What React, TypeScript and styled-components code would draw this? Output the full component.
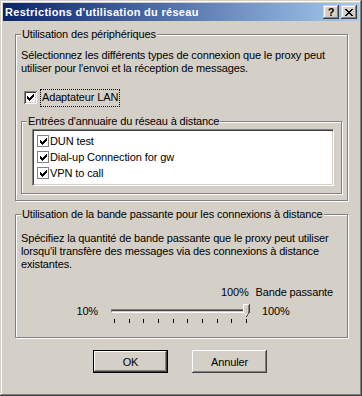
import React from "react";
import styled, { createGlobalStyle } from "styled-components";

const GlobalStyle = createGlobalStyle`
  html, body { margin: 0; padding: 0; background: #d4d0c8; }
  body {
    font-family: "Liberation Sans", Arial, sans-serif;
    font-size: 11px;
    color: #000;
  }
`;

const Window = styled.div`
  width: 362px;
  height: 396px;
  box-sizing: border-box;
  padding: 3px;
  background: #d4d0c8;
  box-shadow: inset -1px -1px 0 #404040, inset 1px 1px 0 #d4d0c8,
    inset -2px -2px 0 #808080, inset 2px 2px 0 #fff;
  display: flex;
  flex-direction: column;
`;

const Caption = styled.div`
  height: 18px;
  display: flex;
  align-items: center;
  padding: 0 2px;
  background: linear-gradient(to right, #0a246a, #a6caf0);
`;

const Title = styled.span`
  flex: 1;
  color: #fff;
  font-weight: bold;
  font-size: 11px;
  letter-spacing: 0.3px;
  white-space: nowrap;
  line-height: 18px;
`;

const CaptionButtons = styled.div`
  display: flex;
  gap: 2px;
`;

const CaptionButton = styled.div`
  width: 16px;
  height: 14px;
  box-sizing: border-box;
  background: #d4d0c8;
  box-shadow: inset -1px -1px 0 #404040, inset 1px 1px 0 #d4d0c8,
    inset -2px -2px 0 #808080, inset 2px 2px 0 #fff;
  display: flex;
  align-items: center;
  justify-content: center;
  font-weight: bold;
  font-size: 11px;
  line-height: 14px;
`;

const Body = styled.div`
  flex: 1;
  display: flex;
  flex-direction: column;
  padding: 13px 11px 0 12px;
`;

const GroupBox = styled.div<{ $pad: string; $mt?: number }>`
  position: relative;
  border: 1px solid #808080;
  box-shadow: inset 1px 1px 0 #fff, 1px 1px 0 #fff;
  padding: ${(p) => p.$pad};
  margin-top: ${(p) => p.$mt ?? 0}px;
  display: flex;
  flex-direction: column;
`;

const GroupLabel = styled.span`
  position: absolute;
  top: -7px;
  left: 5px;
  padding: 0 1px;
  background: #d4d0c8;
  line-height: 13px;
  letter-spacing: -0.15px;
  white-space: nowrap;
`;

const Paragraph = styled.p`
  margin: 0;
  line-height: 13px;
  letter-spacing: -0.15px;
  white-space: nowrap;
`;

const CheckRow = styled.label`
  display: flex;
  align-items: center;
  height: 17px;
  margin-top: 14px;
  padding-left: 3px;
  gap: 4px;
`;

const Check3D = styled.span`
  width: 13px;
  height: 13px;
  box-sizing: border-box;
  background: #fff;
  box-shadow: inset 1px 1px 0 #808080, inset -1px -1px 0 #fff,
    inset 2px 2px 0 #404040, inset -2px -2px 0 #d4d0c8;
  display: flex;
  align-items: center;
  justify-content: center;
`;

const FocusLabel = styled.span`
  outline: 1px dotted #000;
  padding: 1px 1px 2px 1px;
  line-height: 13px;
  letter-spacing: -0.15px;
`;

const ListBox = styled.div`
  height: 57px;
  box-sizing: border-box;
  background: #fff;
  border-top: 1px solid #808080;
  border-left: 1px solid #808080;
  border-right: 1px solid #fff;
  border-bottom: 1px solid #fff;
  box-shadow: inset 1px 1px 0 #404040, inset -1px -1px 0 #d4d0c8;
  padding: 3px 0 0 4px;
  display: flex;
  flex-direction: column;
`;

const ListRow = styled.div`
  display: flex;
  align-items: center;
  height: 16px;
  gap: 1px;
  letter-spacing: -0.1px;
`;

const FlatCheck = styled.span`
  width: 12px;
  height: 12px;
  box-sizing: border-box;
  border: 1px solid #808080;
  background: #fff;
  display: flex;
  align-items: center;
  justify-content: center;
`;

const ValueRow = styled.div`
  display: flex;
  justify-content: flex-end;
  gap: 7px;
  margin-top: 15px;
  line-height: 13px;
  letter-spacing: -0.15px;
`;

const SliderRow = styled.div`
  display: flex;
  align-items: flex-start;
  margin-top: 4px;
  line-height: 13px;
  letter-spacing: -0.15px;
`;

const SliderLabel = styled.span<{ $w?: number; $ml?: number }>`
  ${(p) => (p.$w ? `width: ${p.$w}px; text-align: right;` : "")}
  margin-left: ${(p) => p.$ml ?? 0}px;
  margin-top: 2px;
`;

const TrackArea = styled.div`
  position: relative;
  width: 138px;
  margin-left: 13px;
  display: flex;
  flex-direction: column;
`;

const Channel = styled.div`
  margin-top: 6px;
  height: 4px;
  box-sizing: border-box;
  border-top: 1px solid #808080;
  border-left: 1px solid #808080;
  border-right: 1px solid #fff;
  border-bottom: 1px solid #fff;
  background: #d4d0c8;
  box-shadow: inset 0 1px 0 #404040;
`;

const Ticks = styled.div`
  margin-top: 6px;
  height: 4px;
  padding: 0 2px 0 3px;
  display: flex;
  justify-content: space-between;
`;

const Tick = styled.span`
  width: 1px;
  height: 4px;
  background: #000;
`;

const Thumb = styled.svg`
  position: absolute;
  left: 132px;
  top: 1px;
`;

const ButtonRow = styled.div`
  display: flex;
  gap: 24px;
  margin-top: 12px;
  padding-left: 78px;
`;

const PushButton = styled.button<{ $default?: boolean }>`
  width: 75px;
  height: 23px;
  box-sizing: border-box;
  padding: 0;
  margin: 0;
  font-family: "Liberation Sans", Arial, sans-serif;
  font-size: 11px;
  color: #000;
  background: #d4d0c8;
  border: ${(p) => (p.$default ? "1px solid #000" : "none")};
  box-shadow: inset -1px -1px 0 #404040, inset 1px 1px 0 #fff,
    inset -2px -2px 0 #808080, inset 2px 2px 0 #d4d0c8;
  letter-spacing: -0.15px;
`;

const CheckMark = () => (
  <svg width="7" height="7" viewBox="0 0 7 7" shapeRendering="crispEdges">
    <path
      fill="#000"
      d="M6 0h1v1h-1z M5 1h2v1h-2z M0 2h1v1h-1z M4 2h3v1h-3z M0 3h2v1h-2z M3 3h3v1h-3z M0 4h5v1h-5z M1 5h3v1h-3z M2 6h1v1h-1z"
    />
  </svg>
);

const CloseGlyph = () => (
  <svg width="8" height="7" viewBox="0 0 8 7" shapeRendering="crispEdges">
    <path
      fill="#000"
      d="M0 0h2v1h-2z M6 0h2v1h-2z M1 1h2v1h-2z M5 1h2v1h-2z M2 2h4v1h-4z M3 3h2v1h-2z M2 4h4v1h-4z M1 5h2v1h-2z M5 5h2v1h-2z M0 6h2v1h-2z M6 6h2v1h-2z"
    />
  </svg>
);

const entries = ["DUN test", "Dial-up Connection for gw", "VPN to call"];

export default function App() {
  return (
    <>
      <GlobalStyle />
      <Window>
        <Caption>
          <Title>Restrictions d'utilisation du réseau</Title>
          <CaptionButtons>
            <CaptionButton>?</CaptionButton>
            <CaptionButton>
              <CloseGlyph />
            </CaptionButton>
          </CaptionButtons>
        </Caption>
        <Body>
          <GroupBox $pad="14px 5px 6px 5px">
            <GroupLabel>Utilisation des périphériques</GroupLabel>
            <Paragraph>
              Sélectionnez les différents types de connexion que le proxy peut
              <br />
              utiliser pour l'envoi et la réception de messages.
            </Paragraph>
            <CheckRow>
              <Check3D>
                <CheckMark />
              </Check3D>
              <FocusLabel>Adaptateur LAN</FocusLabel>
            </CheckRow>
            <GroupBox $pad="7px 7px 7px 10px" $mt={15}>
              <GroupLabel>Entrées d'annuaire du réseau à distance</GroupLabel>
              <ListBox>
                {entries.map((e) => (
                  <ListRow key={e}>
                    <FlatCheck>
                      <CheckMark />
                    </FlatCheck>
                    {e}
                  </ListRow>
                ))}
              </ListBox>
            </GroupBox>
          </GroupBox>
          <GroupBox $pad="17px 14px 14px 5px" $mt={13}>
            <GroupLabel>
              Utilisation de la bande passante pour les connexions à distance
            </GroupLabel>
            <Paragraph>
              Spécifiez la quantité de bande passante que le proxy peut utiliser
              <br />
              lorsqu'il transfère des messages via des connexions à distance
              <br />
              existantes.
            </Paragraph>
            <ValueRow>
              <span>100%</span>
              <span>Bande passante</span>
            </ValueRow>
            <SliderRow>
              <SliderLabel $w={77}>10%</SliderLabel>
              <TrackArea>
                <Channel />
                <Ticks>
                  {Array.from({ length: 10 }).map((_, i) => (
                    <Tick key={i} />
                  ))}
                </Ticks>
                <Thumb width="7" height="13" viewBox="0 0 7 13" shapeRendering="crispEdges">
                  <path fill="#d4d0c8" d="M0 0h7v9l-3.5 4l-3.5-4z" />
                  <path fill="#fff" d="M0 0h6v1h-6z M0 1h1v8h-1z M1 9h1v1h-1z M2 10h1v1h-1z" />
                  <path fill="#808080" d="M5 1h1v8h-1z M4 10h1v1h-1z" />
                  <path fill="#404040" d="M6 0h1v9h-1z M5 9h1v1h-1z M4 11h1v1h-1z M3 12h1v1h-1z" />
                </Thumb>
              </TrackArea>
              <SliderLabel $ml={13}>100%</SliderLabel>
            </SliderRow>
          </GroupBox>
          <ButtonRow>
            <PushButton $default>OK</PushButton>
            <PushButton>Annuler</PushButton>
          </ButtonRow>
        </Body>
      </Window>
    </>
  );
}
